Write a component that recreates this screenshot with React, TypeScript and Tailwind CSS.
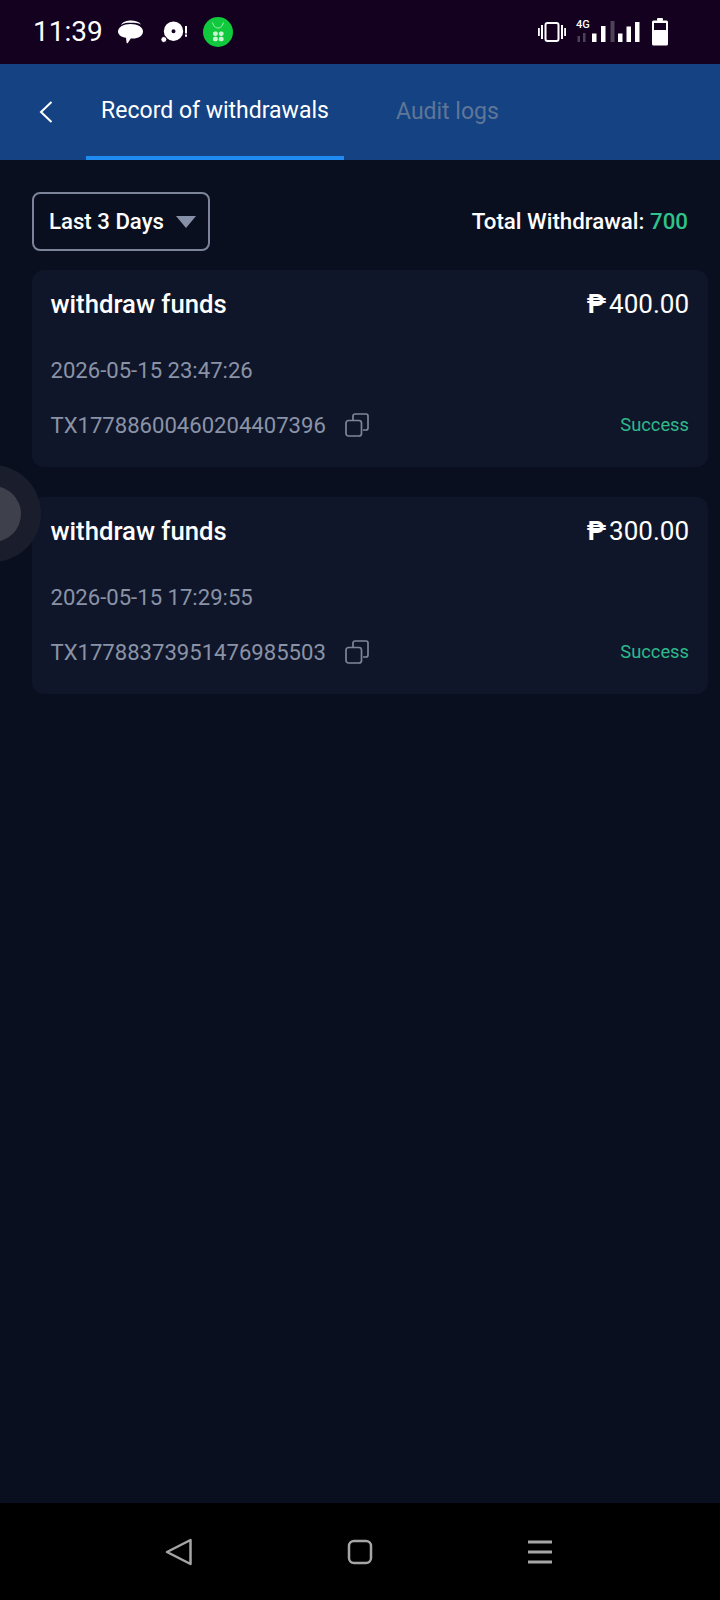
import React from 'react';

const records = [
  { amount: '400.00', date: '2026-05-15 23:47:26', tx: 'TX17788600460204407396' },
  { amount: '300.00', date: '2026-05-15 17:29:55', tx: 'TX17788373951476985503' },
];

const ChatIcon = () => (
  <svg width="25" height="24" viewBox="0 0 25 24" fill="white">
    <path d="M3 5C5 1.500 9 .5 13 .5s8 1 10 4C20 3 17 2.800 13 2.800S6 3 3 5z" />
    <path d="M0 11.500C0 7 5.500 4 12.500 4S25 7 25 11.500 20 18.500 15 18.500c-.8 0-1.500 0-2.200-.1L9.800 23c-.5.6-1.100.4-1.200-.3L8 17.800C3.500 17 0 15 0 11.500z" />
  </svg>
);

const DiscIcon = () => (
  <svg width="26" height="22" viewBox="0 0 26 22" fill="white">
    <path fillRule="evenodd" d="M12.500.5a9.700 9.700 0 1 1 0 19.400 9.700 9.700 0 0 1 0-19.400zm0 7.800a2 2 0 1 0 0 4 2 2 0 0 0 0-4z" />
    <circle cx="2.800" cy="18.500" r="3" stroke="#14001f" strokeWidth="1" />
    <rect x="24" y="5" width="2" height="7.500" />
    <rect x="24" y="13.500" width="2" height="2.200" />
  </svg>
);

const StoreIcon = () => (
  <div className="w-[30px] h-[30px] rounded-full bg-[#10c93c] flex items-center justify-center">
    <svg width="30" height="30" viewBox="0 0 30 30" fill="#c9f5d3">
      <path d="M9.500 5.500c1.300 4 3 5.500 5.500 5.500s4.200-1.500 5.500-5.500" fill="none" stroke="#a8ecb8" strokeWidth="1" />
      <rect x="10" y="14.500" width="4.800" height="4.400" rx="1.800" />
      <rect x="15.800" y="14.500" width="4.800" height="4.400" rx="1.800" />
      <rect x="10" y="19.800" width="4.800" height="4.400" rx="1.800" />
      <rect x="15.800" y="19.800" width="4.800" height="4.400" rx="1.800" />
    </svg>
  </div>
);

const VibrateIcon = () => (
  <svg width="28" height="20" viewBox="0 0 28 20" fill="white">
    <rect x="7.500" y="1" width="13" height="18" rx="2" fill="none" stroke="white" strokeWidth="2" />
    <rect x="0" y="6" width="1.800" height="8" />
    <rect x="3" y="3" width="2" height="14" />
    <rect x="23" y="3" width="2" height="14" />
    <rect x="26.200" y="6" width="1.800" height="8" />
  </svg>
);

const SignalIcon = () => (
  <svg width="64" height="22" viewBox="0 0 64 22" fill="white">
    <rect x="1.500" y="15" width="2.500" height="6" fill="#4a4255" />
    <rect x="7" y="12" width="2.500" height="9" fill="#4a4255" />
    <rect x="16" y="12.500" width="4.500" height="8.500" />
    <rect x="25" y="5" width="4.500" height="16" />
    <rect x="34.500" y="0" width="4" height="21" fill="#4d4458" />
    <rect x="42" y="12.500" width="4.500" height="8.500" />
    <rect x="50.500" y="5.500" width="4.500" height="15.500" />
    <rect x="59" y="1" width="4.500" height="20" />
  </svg>
);

const BatteryIcon = () => (
  <svg width="16" height="28" viewBox="0 0 16 28" fill="white">
    <rect x="5" y="0" width="6" height="3" rx="1" />
    <path d="M1.500 2.500h13a1.500 1.500 0 0 1 1.500 1.500v22a1.500 1.500 0 0 1-1.500 1.500h-13A1.500 1.500 0 0 1 0 26V4a1.500 1.500 0 0 1 1.500-1.500z" />
    <rect x="2" y="5" width="12" height="7" fill="#14001f" />
  </svg>
);

const CopyIcon = () => (
  <svg width="24" height="24" viewBox="0 0 24 24" fill="none" stroke="#7d8698" strokeWidth="1.700">
    <rect x="1" y="7.500" width="15.500" height="15.500" rx="2.500" />
    <path d="M8 7V3a2 2 0 0 1 2-2h11a2 2 0 0 1 2 2v12a2 2 0 0 1-2 2h-3" />
  </svg>
);

export default function App() {
  return (
    <div className="w-[720px] h-[1600px] flex flex-col bg-[#0a0f1f] overflow-hidden font-['Roboto',sans-serif]">
      {/* status bar */}
      <div className="h-16 shrink-0 bg-[#14001f] flex items-center justify-between pl-[33px] pr-[52px]">
        <div className="flex items-center">
          <span className="text-white text-[28px] leading-none">11:39</span>
          <div className="ml-[15px] -mt-[1px]"><ChatIcon /></div>
          <div className="ml-[18px]"><DiscIcon /></div>
          <div className="ml-4"><StoreIcon /></div>
        </div>
        <div className="flex items-center">
          <VibrateIcon />
          <div className="relative ml-2.5 w-16 h-[22px]">
            <SignalIcon />
            <span className="absolute left-0 -top-[2px] text-white text-[11px] leading-none font-medium">4G</span>
          </div>
          <div className="ml-3"><BatteryIcon /></div>
        </div>
      </div>

      {/* tabs */}
      <div className="h-24 shrink-0 bg-[#154283] flex items-stretch">
        <div className="w-[86px] shrink-0 flex items-center pl-[39px]">
          <svg width="14" height="22" viewBox="0 0 14 22" fill="none" stroke="white" strokeWidth="2">
            <path d="M12.500 1 2 11l10.500 10" />
          </svg>
        </div>
        <div className="w-[258px] border-b-4 border-[#1f8bf0] flex items-center justify-center pt-0.5">
          <span className="text-white text-[23px]">Record of withdrawals</span>
        </div>
        <div className="ml-[52px] flex items-center">
          <span className="text-[#5f7697] text-[23px]">Audit logs</span>
        </div>
      </div>

      {/* content */}
      <div className="relative flex-1 pl-8 pr-3">
        <div className="flex items-center justify-between pt-8 pr-5">
          <div className="w-[178px] h-[59px] border-2 border-[#7b8499] rounded-lg flex items-center pl-[15px] gap-3">
            <span className="text-white text-[22.2px] font-medium">Last 3 Days</span>
            <span className="w-0 h-0 border-l-[10px] border-r-[10px] border-t-[12px] border-l-transparent border-r-transparent border-t-[#8690a8]" />
          </div>
          <div className="text-white text-[22.3px] font-medium">
            Total Withdrawal: <span className="text-[#2fc28b]">700</span>
          </div>
        </div>

        <div className="mt-[19px] flex flex-col gap-[30px]">
          {records.map((r) => (
            <div key={r.tx} className="h-[197px] rounded-xl bg-[#10162a] pl-[18.5px] pr-[19px] pt-[18px]">
              <div className="flex items-center justify-between">
                <span className="text-white text-[25.7px] font-medium leading-8">withdraw funds</span>
                <span className="text-white text-[26px] leading-8">
                  <span className="font-bold">₱</span>
                  <span className="ml-[3px]">{r.amount}</span>
                </span>
              </div>
              <div className="mt-[35.5px] text-[#8a93a6] text-[22.1px] leading-7">{r.date}</div>
              <div className="mt-[27.5px] flex items-center justify-between">
                <div className="flex items-center gap-[19.5px]">
                  <span className="text-[#8a93a6] text-[22.1px] leading-7">{r.tx}</span>
                  <CopyIcon />
                </div>
                <span className="text-[#2fb98a] text-[18.3px]">Success</span>
              </div>
            </div>
          ))}
        </div>

        {/* floating ball */}
        <div className="absolute -left-14 top-[305px] w-[97px] h-[97px] rounded-full bg-[#1a1e2c] flex items-center justify-center">
          <div className="w-14 h-14 rounded-full bg-[#3e414b]" />
        </div>
      </div>

      {/* nav bar */}
      <div className="h-[97px] shrink-0 bg-black flex items-center justify-between pl-[165px] pr-[167px]">
        <svg width="28" height="28" viewBox="0 0 28 28" fill="none" stroke="#a6a6a6" strokeWidth="2.500" strokeLinejoin="round">
          <path d="M2 14 25.500 2v24z" />
        </svg>
        <svg width="26" height="26" viewBox="0 0 26 26" fill="none" stroke="#a6a6a6" strokeWidth="2.500">
          <rect x="2" y="2" width="22" height="22" rx="5" />
        </svg>
        <svg width="26" height="26" viewBox="0 0 26 26" fill="#a6a6a6">
          <rect x="1" y="1.500" width="24" height="3" />
          <rect x="1" y="11.500" width="24" height="3" />
          <rect x="1" y="21.500" width="24" height="3" />
        </svg>
      </div>
    </div>
  );
}
